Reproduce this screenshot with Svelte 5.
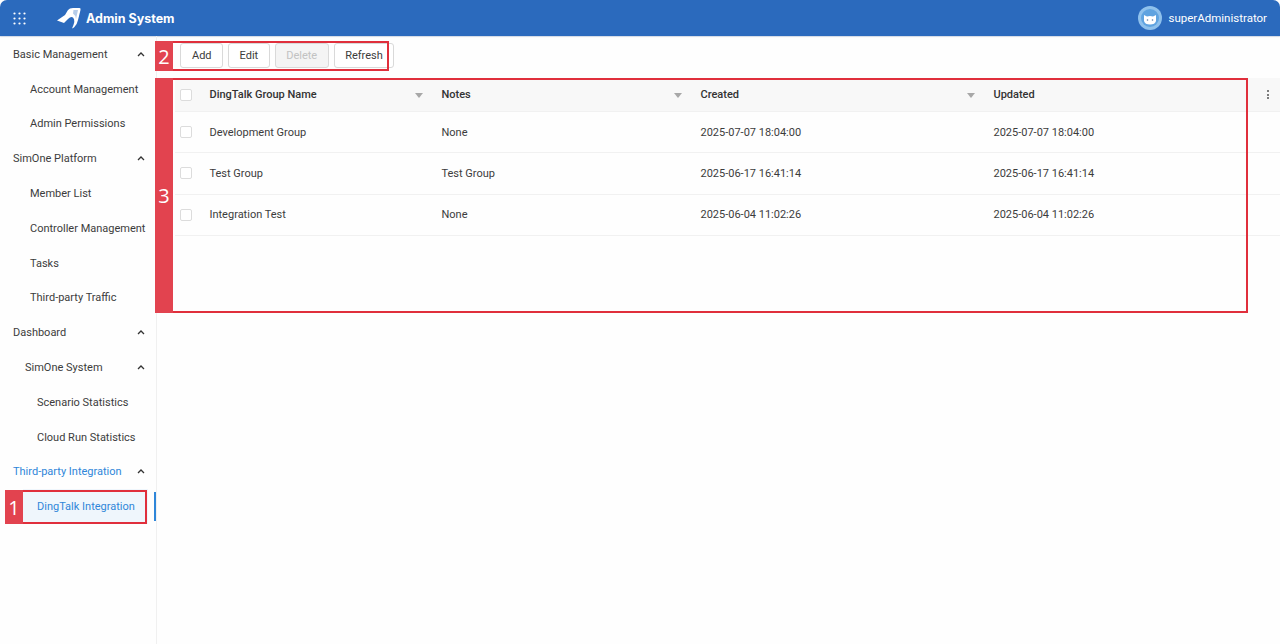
<script>
  const menu = [
    { label: 'Basic Management', level: 0, caret: true },
    { label: 'Account Management', level: 1 },
    { label: 'Admin Permissions', level: 1 },
    { label: 'SimOne Platform', level: 0, caret: true },
    { label: 'Member List', level: 1 },
    { label: 'Controller Management', level: 1 },
    { label: 'Tasks', level: 1 },
    { label: 'Third-party Traffic', level: 1 },
    { label: 'Dashboard', level: 0, caret: true },
    { label: 'SimOne System', level: 1, sub: true, caret: true },
    { label: 'Scenario Statistics', level: 2 },
    { label: 'Cloud Run Statistics', level: 2 },
    { label: 'Third-party Integration', level: 0, caret: true, open: true },
    { label: 'DingTalk Integration', level: 2, active: true }
  ];
  const rows = [
    ['Development Group', 'None', '2025-07-07 18:04:00', '2025-07-07 18:04:00'],
    ['Test Group', 'Test Group', '2025-06-17 16:41:14', '2025-06-17 16:41:14'],
    ['Integration Test', 'None', '2025-06-04 11:02:26', '2025-06-04 11:02:26']
  ];
</script>

<div class="page">
  <header class="top">
    <svg class="grid-icon" viewBox="0 0 13 13" width="13" height="13" fill="#fff">
      {#each [1.5, 6.5, 11.5] as y}
        {#each [1.5, 6.5, 11.5] as x}
          <circle cx={x} cy={y} r="1.1" />
        {/each}
      {/each}
    </svg>
    <svg class="logo" viewBox="0 0 26 22" width="26" height="22" fill="#fff">
      <path d="M1 13.5 L9 8 L12 3 Q13.500 1 17 1 L23.500 1 Q25 1 24.500 3 L22 13 Q21 18 18 20.500 L16 21.500 Q20 13 17 10.500 Q15 9 12 12 L8 16 Z" />
      <path d="M17.500 3 L22 3 L20 12 Q19.500 8 17 6.500 Z" fill="#2b6cbf" opacity="0.35" />
    </svg>
    <span class="brand">Admin System</span>
    <div class="user">
      <svg class="avatar" viewBox="0 0 24 24" width="24" height="24">
        <circle cx="12" cy="12" r="12" fill="#8fc1ec" />
        <circle cx="12" cy="12" r="9" fill="#5fa3e0" />
        <path d="M6 9 L9 10.500 Q12 9.500 15 10.500 L18 9 L18 15 Q17 18.500 12 18.500 Q7 18.500 6 15 Z" fill="#fff" />
        <circle cx="9.500" cy="14" r="0.8" fill="#5b7ea6" />
        <circle cx="14.500" cy="14" r="0.8" fill="#5b7ea6" />
      </svg>
      <span>superAdministrator</span>
    </div>
  </header>

  <div class="body">
    <nav class="side">
      {#each menu as item}
        <div
          class="item lv{item.level}"
          class:sub={item.sub}
          class:open={item.open}
          class:active={item.active}
        >
          <span>{item.label}</span>
          {#if item.caret}
            <svg class="caret" viewBox="0 0 8 5" width="8" height="5" fill="none" stroke="#333" stroke-width="1.300">
              <path d="M1 4 L4 1 L7 4" />
            </svg>
          {/if}
        </div>
      {/each}
    </nav>

    <main class="content">
      <div class="toolbar">
        <button>Add</button>
        <button>Edit</button>
        <button class="off">Delete</button>
        <button>Refresh</button>
      </div>
      <div class="table">
        <div class="tr head">
          <span class="check"></span>
          <span class="cell">DingTalk Group Name<i class="sort"></i></span>
          <span class="cell">Notes<i class="sort"></i></span>
          <span class="cell">Created<i class="sort"></i></span>
          <span class="cell">Updated</span>
          <span class="kebab"><b></b><b></b><b></b></span>
        </div>
        {#each rows as r}
          <div class="tr">
            <span class="check"></span>
            {#each r as c}
              <span class="cell">{c}</span>
            {/each}
          </div>
        {/each}
      </div>
    </main>
  </div>

  <div class="mark m1"><span>1</span></div>
  <div class="mark m2"><span>2</span></div>
  <div class="mark m3"><span>3</span></div>
</div>

<style>
  :global(body) {
    margin: 0;
    background: #fff;
  }
  .page {
    position: relative;
    width: 1280px;
    height: 644px;
    overflow: hidden;
    display: flex;
    flex-direction: column;
    background: #fefefe;
    color: #3c3c3c;
    font-family: Roboto, "Liberation Sans", sans-serif;
    font-size: 11px;
  }
  .top {
    flex: 0 0 36px;
    display: flex;
    align-items: center;
    background: #2b6abd;
    color: #fff;
    border-radius: 7px 7px 0 0;
    padding: 0 13px;
    box-shadow: 0 1px 1px rgba(30, 70, 130, 0.2);
  }
  .logo {
    margin-left: 30px;
  }
  .brand {
    margin-left: 4px;
    font-weight: 700;
    font-size: 12.500px;
    font-family: Inter, sans-serif;
  }
  .user {
    margin-left: auto;
    display: flex;
    align-items: center;
    gap: 7px;
    font-size: 11.500px;
  }
  .body {
    flex: 1;
    display: flex;
    min-height: 0;
  }
  .side {
    flex: 0 0 155px;
    box-sizing: border-box;
    border-right: 1px solid #f0f0f0;
    padding-top: 1px;
  }
  .item {
    position: relative;
    height: 34.800px;
    display: flex;
    align-items: center;
    white-space: nowrap;
    padding-right: 11px;
    justify-content: space-between;
  }
  .lv0 { padding-left: 13px; }
  .lv1 { padding-left: 30px; }
  .lv1.sub { padding-left: 25px; }
  .lv2 { padding-left: 37px; }
  .open { color: #2f86d9; }
  .active { color: #2f86d9; }
  .active::before {
    content: "";
    position: absolute;
    inset: 0 8px 0 23px;
    background: #eff6fc;
    z-index: 0;
  }
  .active span { position: relative; }
  .active::after {
    content: "";
    position: absolute;
    right: 0;
    top: 3px;
    bottom: 3px;
    width: 2px;
    background: #2f86d9;
  }
  .content {
    flex: 1;
    min-width: 0;
    padding: 7px 0 0 23px;
  }
  .toolbar {
    display: flex;
    gap: 5px;
    height: 25px;
    margin-bottom: 10px;
  }
  button {
    box-sizing: border-box;
    height: 25px;
    padding: 0 10.500px;
    background: #fff;
    border: 1px solid #d9d9d9;
    border-radius: 3px;
    color: #3c3c3c;
    font: inherit;
  }
  button.off {
    background: #f4f4f4;
    color: #c2c2c2;
  }
  .table {
    margin-left: -5px;
    position: relative;
  }
  .tr {
    display: grid;
    grid-template-columns: 34px 232px 259px 293px 1fr;
    height: 41.300px;
    align-items: center;
    border-bottom: 1px solid #f1f1f1;
    box-sizing: border-box;
    padding-left: 0;
  }
  .tr.head {
    height: 34px;
    background: #f8f8f8;
    font-weight: 500;
    color: #333;
  }
  .head .cell:first-of-type { font-weight: 400; }
  .check {
    width: 12px;
    height: 12px;
    margin-left: 5px;
    background: #fff;
    border: 1px solid #dcdcdc;
    border-radius: 2px;
    box-sizing: border-box;
  }
  .cell {
    position: relative;
    white-space: nowrap;
  }
  .sort {
    position: absolute;
    right: 18px;
    top: 5px;
    border-left: 4px solid transparent;
    border-right: 4px solid transparent;
    border-top: 5px solid #a8a8a8;
  }
  .kebab {
    position: absolute;
    left: 1092px;
    top: 12px;
    display: flex;
    flex-direction: column;
    gap: 1.500px;
  }
  .kebab b {
    width: 2px;
    height: 2px;
    border-radius: 50%;
    background: #555;
  }
  .mark {
    position: absolute;
    box-sizing: border-box;
    border: 2px solid #e02f3c;
    pointer-events: none;
  }
  .mark span {
    position: absolute;
    left: -2px;
    top: -2px;
    bottom: -2px;
    width: 18px;
    background: #e2434f;
    color: #fff;
    display: flex;
    align-items: center;
    justify-content: center;
    font-family: "Open Sans", sans-serif;
    font-size: 20px;
  }
  .m1 { left: 5px; top: 490px; width: 142px; height: 34px; }
  .m2 { left: 155px; top: 41px; width: 234px; height: 30px; }
  .m3 { left: 155px; top: 78px; width: 1093px; height: 235px; }
</style>
